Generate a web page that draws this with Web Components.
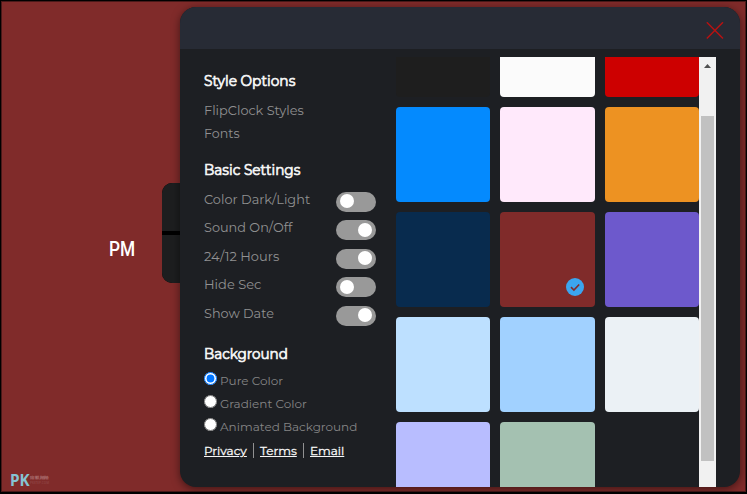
<!DOCTYPE html>
<html lang="en">
<head>
<meta charset="utf-8">
<title>FlipClock</title>
<style>
  html, body { margin: 0; height: 100%; overflow: hidden; background: #000; }
  body { font-family: Montserrat, Inter, "Open Sans", sans-serif; font-size: 13px; color: #919192; }
</style>
</head>
<body>
<clock-page>
  <flip-clock slot="clock" period="PM"></flip-clock>
  <site-logo slot="logo"></site-logo>
  <settings-panel slot="panel">
    <settings-menu slot="menu"></settings-menu>
    <color-palette slot="content" selected="7"></color-palette>
  </settings-panel>
</clock-page>

<script>
  // Stretches a line of text to the given width
  class FitText extends HTMLElement {
    constructor() {
      super();
      this.attachShadow({ mode: 'open' });
    }

    connectedCallback() {
      this.shadowRoot.innerHTML = `
        <style>
          :host { display: inline-block; white-space: nowrap; width: ${this.getAttribute('width')}px; }
          span { display: inline-block; transform-origin: 0 50%; }
        </style>
        <span><slot></slot></span>
      `;
      const span = this.shadowRoot.querySelector('span');
      const scale = this.getAttribute('width') / span.offsetWidth;
      span.style.transform = `scaleX(${scale})`;
    }
  }

  class ClockPage extends HTMLElement {
    constructor() {
      super();
      this.attachShadow({ mode: 'open' });
      this.shadowRoot.innerHTML = `
        <style>
          :host {
            display: flex;
            align-items: center;
            position: relative;
            box-sizing: border-box;
            width: 747px;
            height: 494px;
            border: solid #000;
            border-width: 1px 1px 2px 1px;
            box-shadow: inset 0 0 0 1px #4a1919;
            background: #802b2a;
            overflow: hidden;
          }
          .panel { position: absolute; left: 179px; top: 6px; }
          .logo { position: absolute; left: 9px; top: 471px; }
        </style>
        <slot name="clock"></slot>
        <div class="logo"><slot name="logo"></slot></div>
        <div class="panel"><slot name="panel"></slot></div>
      `;
    }
  }

  class FlipClock extends HTMLElement {
    constructor() {
      super();
      this.attachShadow({ mode: 'open' });
    }

    connectedCallback() {
      this.shadowRoot.innerHTML = `
        <style>
          :host { display: flex; align-items: center; padding-left: 108px; margin-top: -27px; }
          .period {
            width: 53px;
            padding-top: 32px;
            font: 500 20px/24px Roboto, sans-serif;
            color: #fff;
          }
          .card { display: grid; grid-template-rows: 48px 48px; gap: 4px; background: #000; width: 160px; border-radius: 10px; overflow: hidden; }
          .card div { background: #1d1e1f; }
        </style>
        <div class="period"><fit-text width="26">${this.getAttribute('period')}</fit-text></div>
        <div class="card"><div></div><div></div></div>
      `;
    }
  }

  class SiteLogo extends HTMLElement {
    constructor() {
      super();
      this.attachShadow({ mode: 'open' });
      this.shadowRoot.innerHTML = `
        <style>
          :host { display: flex; font-family: "Open Sans", sans-serif; }
          .mark { font-size: 16px; line-height: 16px; font-weight: 700; color: #86c3d3; }
          .name { padding-top: 3px; font-size: 4px; line-height: 5px; font-weight: 700; color: #a86a6b; }
          .name div:last-child { color: #8d4040; }
        </style>
        <div class="mark"><fit-text width="20">PK</fit-text></div>
        <div class="name">
          <div><fit-text width="19">痞凱踏踏</fit-text></div>
          <div><fit-text width="19">PKSTEP.COM</fit-text></div>
        </div>
      `;
    }
  }

  class SettingsPanel extends HTMLElement {
    constructor() {
      super();
      this.attachShadow({ mode: 'open' });
      this.shadowRoot.innerHTML = `
        <style>
          :host {
            display: flex;
            flex-direction: column;
            width: 560px;
            height: 480px;
            border-radius: 16px;
            background: #1d1f23;
            overflow: hidden;
            box-shadow: 0 2px 8px rgba(0, 0, 0, .5);
          }
          header {
            display: flex;
            justify-content: flex-end;
            align-items: flex-start;
            box-sizing: border-box;
            height: 42px;
            padding: 15px 16px 0 0;
            background: #272b35;
          }
          main { display: flex; flex: 1; padding: 8px 24px 0; }
          .menu { width: 192px; }
        </style>
        <header>
          <svg width="18" height="18" viewBox="0 0 18 18">
            <path d="M.8.3 17 16.5M17 .3.8 16.5" stroke="#b51212" stroke-width="1.5" fill="none"/>
          </svg>
        </header>
        <main>
          <div class="menu"><slot name="menu"></slot></div>
          <slot name="content"></slot>
        </main>
      `;
    }
  }

  class ToggleSwitch extends HTMLElement {
    constructor() {
      super();
      this.attachShadow({ mode: 'open' });
      this.shadowRoot.innerHTML = `
        <style>
          :host {
            display: flex;
            box-sizing: border-box;
            width: 40px;
            height: 20px;
            padding: 2.5px 4px;
            border-radius: 10px;
            background: #999;
          }
          :host([on]) { justify-content: flex-end; }
          i { width: 14px; height: 14px; border-radius: 50%; background: #fff; }
        </style>
        <i></i>
      `;
    }
  }

  class SettingsMenu extends HTMLElement {
    constructor() {
      super();
      this.attachShadow({ mode: 'open' });
    }

    connectedCallback() {
      const toggles = [
        ['Color Dark/Light', 106, ''],
        ['Sound On/Off', 88, 'on'],
        ['24/12 Hours', 75, 'on'],
        ['Hide Sec', 57, ''],
        ['Show Date', 70, 'on']
      ];
      const backgrounds = [
        ['Pure Color', 63, 'checked'],
        ['Gradient Color', 87, ''],
        ['Animated Background', 137, '']
      ];

      this.shadowRoot.innerHTML = `
        <style>
          :host { display: block; padding-top: 14px; }
          h3 {
            margin: 0;
            font-size: 14.5px;
            line-height: 20px;
            height: 20px;
            font-weight: 400;
            color: #f6f6f6;
            -webkit-text-stroke: .7px #f6f6f6;
          }
          .links { margin: 8px 0 15px; }
          .links div { height: 23px; line-height: 23px; }
          .row { display: flex; justify-content: space-between; width: 172px; height: 28.5px; line-height: 16px; }
          .toggles { padding: 11.7px 0 9.8px; }
          .row fit-text { margin-top: -1px; }
          label { display: flex; height: 23px; line-height: 16px; font-size: 12px; color: #858586; }
          label fit-text { margin: 1px 0 0 3px; }
          input { width: 13px; height: 13px; margin: 0; }
          .radios { padding-top: 8px; }
          footer { display: flex; align-items: center; height: 18px; margin-top: 1px; font-size: 12px; }
          a { color: #f6f6f6; text-decoration: underline; -webkit-text-stroke: .3px #f6f6f6; }
          hr { width: 1px; height: 15px; margin: 0 6px; border: 0; background: #919192; }
        </style>
        <h3><fit-text width="91">Style Options</fit-text></h3>
        <div class="links">
          <div><fit-text width="100">FlipClock Styles</fit-text></div>
          <div><fit-text width="36">Fonts</fit-text></div>
        </div>
        <h3><fit-text width="96">Basic Settings</fit-text></h3>
        <div class="toggles">
          ${toggles.map(([name, width, on]) => `
            <div class="row"><fit-text width="${width}">${name}</fit-text><toggle-switch ${on}></toggle-switch></div>
          `).join('')}
        </div>
        <h3><fit-text width="84">Background</fit-text></h3>
        <div class="radios">
          ${backgrounds.map(([name, width, checked]) => `
            <label><input type="radio" name="bg" ${checked}><fit-text width="${width}">${name}</fit-text></label>
          `).join('')}
        </div>
        <footer>
          <fit-text width="43"><a>Privacy</a></fit-text><hr>
          <fit-text width="37"><a>Terms</a></fit-text><hr>
          <fit-text width="34"><a>Email</a></fit-text>
        </footer>
      `;
    }
  }

  class ColorPalette extends HTMLElement {
    constructor() {
      super();
      this.attachShadow({ mode: 'open' });
    }

    connectedCallback() {
      const colors = [
        '#1e1e1e', '#fbfbfb', '#cd0000',
        '#048afe', '#ffe9fb', '#ed9222',
        '#082b4e', '#802b2a', '#6d59cc',
        '#bde0ff', '#a1d1ff', '#ebf1f5',
        '#b8bdff', '#a4c1b1'
      ];
      const selected = Number(this.getAttribute('selected'));
      const check = `
        <svg width="18" height="18" viewBox="0 0 18 18">
          <circle cx="9" cy="9" r="9" fill="#3ba5ef"/>
          <path d="M5 9.2 7.9 12 13.2 6.5" stroke="#802b2a" stroke-width="1.6" fill="none"/>
        </svg>
      `;

      this.shadowRoot.innerHTML = `
        <style>
          :host { display: flex; width: 320px; height: 430px; overflow: hidden; }
          .grid {
            display: grid;
            grid-template-columns: repeat(3, 1fr);
            grid-auto-rows: 95px;
            gap: 10px;
            width: 303px;
            margin-top: -55px;
          }
          .swatch {
            display: flex;
            justify-content: flex-end;
            align-items: flex-end;
            box-sizing: border-box;
            padding: 0 11px 11.5px 0;
            border-radius: 4px;
          }
          .bar { width: 17px; background: #f1f1f1; }
          .bar svg { display: block; margin: 7px 0 0 5px; }
          .thumb { width: 13px; height: 345px; margin: 48px 0 0 2px; background: #c1c1c1; }
        </style>
        <div class="grid">
          ${colors.map((color, i) => `
            <div class="swatch" style="background: ${color}">${i === selected ? check : ''}</div>
          `).join('')}
        </div>
        <div class="bar">
          <svg width="7" height="4" viewBox="0 0 7 4"><path d="M0 4 3.5 0 7 4z" fill="#505050"/></svg>
          <div class="thumb"></div>
        </div>
      `;
    }
  }

  customElements.define('fit-text', FitText);
  customElements.define('clock-page', ClockPage);
  customElements.define('flip-clock', FlipClock);
  customElements.define('site-logo', SiteLogo);
  customElements.define('settings-panel', SettingsPanel);
  customElements.define('toggle-switch', ToggleSwitch);
  customElements.define('settings-menu', SettingsMenu);
  customElements.define('color-palette', ColorPalette);
</script>
</body>
</html>
